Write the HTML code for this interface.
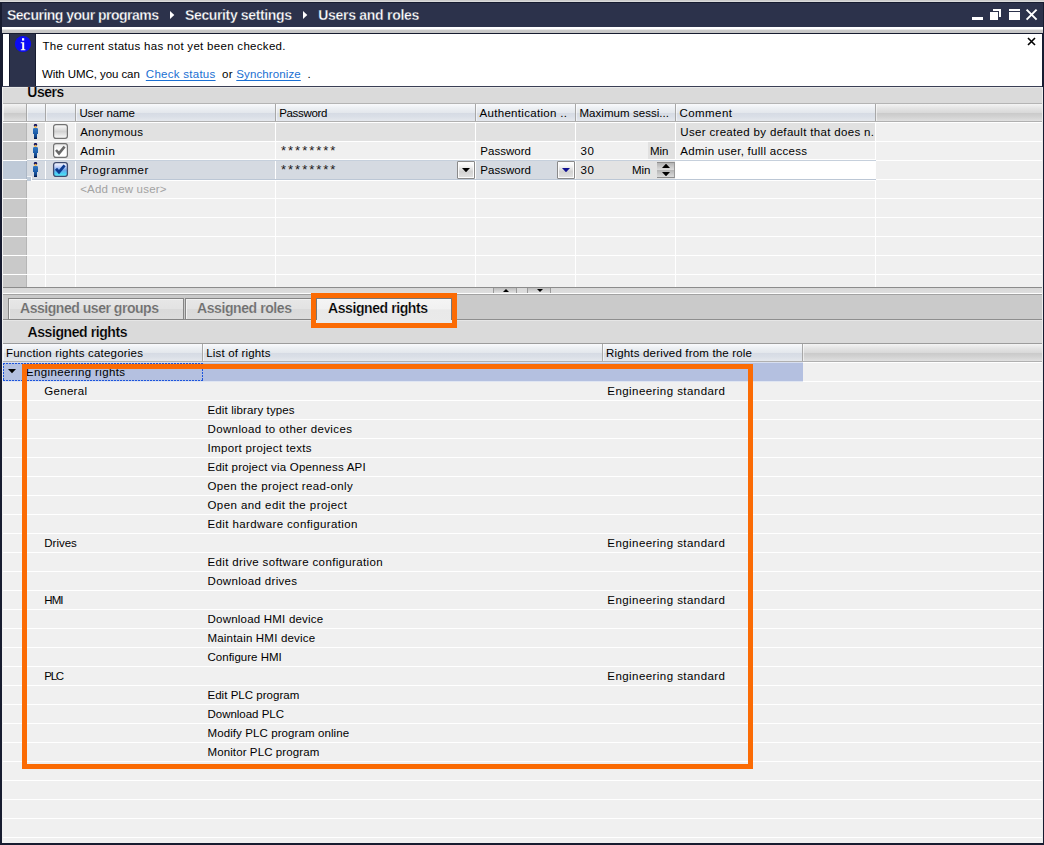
<!DOCTYPE html><html lang="en"><head><meta charset="utf-8"><title>Users and roles</title><style>
html,body{margin:0;padding:0}
body{width:1044px;height:845px;position:relative;overflow:hidden;background:#f0f0f0;font:12px "Liberation Sans", sans-serif;color:#000}
.a{position:absolute}
.t{position:absolute;white-space:pre;line-height:16px;height:16px;font-size:11.5px}
.ttl{font-weight:bold;font-size:14px;color:#fff;-webkit-text-stroke:0.3px #2c324b}
.hd{font-weight:bold;font-size:14px;-webkit-text-stroke:0.2px #dadada}
.tab{font-weight:bold;font-size:14px;color:#6e6e6e;-webkit-text-stroke:0.15px #e0e0e0}
.tab.act{color:#000;-webkit-text-stroke:0.2px #eeeeee}
.lnk{color:#1a6fd2;text-decoration:underline;text-underline-offset:2px;text-decoration-thickness:1px}
.gray{color:#a2a2a2}
.star{font-size:13px;color:#1a1a1a}
.hdr,.ehdr{box-shadow:inset 1px 0 0 rgba(255,255,255,.55)}
.hdr{background:linear-gradient(#f9fafc 0%,#eceff3 25%,#e3e7ec 52%,#d6dbe4 54%,#dadfe7 75%,#e5e8ed 100%)}
.ehdr{background:linear-gradient(#f4f4f4 0%,#e4e4e4 25%,#d9d9d9 52%,#cacaca 54%,#d2d2d2 75%,#e0e0e0 100%)}
</style></head><body>
<div class="a" style="left:0px;top:0px;width:1044px;height:1px;background:#cccccc;"></div>
<div class="a" style="left:0px;top:1px;width:1044px;height:1px;background:#dcdcdc;"></div>
<div class="a" style="left:0px;top:2px;width:1044px;height:843px;background:#171c30;"></div>
<div class="a" style="left:2px;top:3px;width:1041px;height:24px;background:#2c324b;"></div>
<div class="a" style="left:2px;top:27px;width:1041px;height:6px;background:linear-gradient(#ffffff 0%,#ffffff 30%,#e2e2e2 45%,#c8c8c8 58%,#c6c6c6 100%);"></div>
<div class="a" style="left:2px;top:33px;width:1040px;height:1px;background:#171c30;"></div>
<div class="a" style="left:3px;top:34px;width:1039px;height:52px;background:#ffffff;"></div>
<div class="a" style="left:9px;top:34px;width:26px;height:52px;background:#2c324b;"></div>
<div class="a" style="left:35px;top:34px;width:1px;height:52px;background:#171c30;"></div>
<div class="a" style="left:9px;top:34px;width:1px;height:52px;background:#171c30;"></div>
<div class="a" style="left:2px;top:86px;width:1040px;height:1px;background:#3a3f55;"></div>
<svg class="a" style="left:14px;top:35px" width="18" height="18" viewBox="0 0 18 18"><circle cx="9" cy="9" r="8.1" fill="#0c0cf6"/><rect x="8" y="3.2" width="2.2" height="2.4" fill="#fff"/><path d="M6.8 7.2h3.4v7h1.2v1H6.8v-1h1.4V8.3H6.8z" fill="#fffff0"/></svg>
<svg class="a" style="left:965px;top:3px" width="77" height="24" viewBox="965 3 77 24" shape-rendering="crispEdges"><g fill="#fff"><rect x="972" y="17" width="11" height="3"/><rect x="990" y="12" width="8" height="8"/><path d="M993 9H1001V17H999V11H993z"/><rect x="1009" y="9" width="11" height="2"/><rect x="1009" y="12" width="11" height="8"/></g><g stroke="#fff" stroke-width="2" shape-rendering="geometricPrecision"><path d="M1026.6 9.6l10 10M1036.6 9.6l-10 10"/></g></svg>
<svg class="a" style="left:1026px;top:36px" width="11" height="11" viewBox="0 0 11 11"><path d="M2 2l7 7M9 2l-7 7" stroke="#000" stroke-width="1.6"/></svg>
<svg class="a" style="left:170px;top:11px" width="6" height="9" viewBox="0 0 6 9"><path d="M0 0L4.3 4L0 8z" fill="#fff"/></svg>
<svg class="a" style="left:303.3px;top:11px" width="6" height="9" viewBox="0 0 6 9"><path d="M0 0L4.3 4L0 8z" fill="#fff"/></svg>
<div class="a" style="left:2px;top:87px;width:1040px;height:16px;background:#dadada;"></div>
<div class="a" style="left:2px;top:87px;width:1px;height:756px;background:#f0f0f0;"></div>
<div class="a" style="left:1042px;top:87px;width:1px;height:756px;background:#ececec;"></div>
<div class="a" style="left:3px;top:87px;width:1039px;height:1px;background:#e8e8e8;"></div>
<div class="a" style="left:3px;top:103px;width:1039px;height:1px;background:#b4b4b4;"></div>
<div class="a" style="left:3px;top:121px;width:1039px;height:1px;background:#b0b0b0;"></div>
<div class="a ehdr" style="left:3px;top:104px;width:23px;height:17px;"></div>
<div class="a hdr" style="left:27px;top:104px;width:18px;height:17px;"></div>
<div class="a" style="left:45px;top:104px;width:1px;height:17px;background:#a8a8a8;"></div>
<div class="a hdr" style="left:46px;top:104px;width:29px;height:17px;"></div>
<div class="a" style="left:75px;top:104px;width:1px;height:17px;background:#a8a8a8;"></div>
<div class="a hdr" style="left:76px;top:104px;width:199px;height:17px;"></div>
<div class="a" style="left:275px;top:104px;width:1px;height:17px;background:#a8a8a8;"></div>
<div class="a hdr" style="left:276px;top:104px;width:199px;height:17px;"></div>
<div class="a" style="left:475px;top:104px;width:1px;height:17px;background:#a8a8a8;"></div>
<div class="a hdr" style="left:476px;top:104px;width:99px;height:17px;"></div>
<div class="a" style="left:575px;top:104px;width:1px;height:17px;background:#a8a8a8;"></div>
<div class="a hdr" style="left:576px;top:104px;width:99px;height:17px;"></div>
<div class="a" style="left:675px;top:104px;width:1px;height:17px;background:#a8a8a8;"></div>
<div class="a hdr" style="left:676px;top:104px;width:199px;height:17px;"></div>
<div class="a" style="left:875px;top:104px;width:1px;height:17px;background:#a8a8a8;"></div>
<div class="a" style="left:26px;top:104px;width:1px;height:17px;background:#a8a8a8;"></div>
<div class="a ehdr" style="left:876px;top:104px;width:166px;height:17px;"></div>
<div class="a" style="left:3px;top:122px;width:1039px;height:165px;background:#f0f0f0;"></div>
<div class="a" style="left:3px;top:122px;width:23px;height:165px;background:#c9c9c9;"></div>
<div class="a" style="left:27px;top:123px;width:18px;height:18px;background:#e1e1e1;"></div>
<div class="a" style="left:76px;top:123px;width:799px;height:18px;background:#e1e1e1;"></div>
<div class="a" style="left:27px;top:142px;width:18px;height:18px;background:#e1e1e1;"></div>
<div class="a" style="left:46px;top:142px;width:29px;height:18px;background:#e1e1e1;"></div>
<div class="a" style="left:648px;top:142px;width:27px;height:18px;background:#e1e1e1;"></div>
<div class="a" style="left:3px;top:161px;width:23px;height:18px;background:#bfcad8;"></div>
<div class="a" style="left:27px;top:161px;width:848px;height:18px;background:#d5dae1;"></div>
<div class="a" style="left:576px;top:161px;width:99px;height:18px;background:#e3e3e3;"></div>
<div class="a" style="left:676px;top:161px;width:199px;height:18px;background:#ffffff;"></div>
<div class="a" style="left:26px;top:122px;width:1px;height:165px;background:#b6b6b6;"></div>
<div class="a" style="left:26px;top:161px;width:1px;height:18px;background:#acb7c5;"></div>
<div class="a" style="left:3px;top:122px;width:1039px;height:1px;background:#ffffff;"></div>
<div class="a" style="left:3px;top:141px;width:1039px;height:1px;background:#ffffff;"></div>
<div class="a" style="left:3px;top:160px;width:1039px;height:1px;background:#ffffff;"></div>
<div class="a" style="left:3px;top:179px;width:1039px;height:1px;background:#ffffff;"></div>
<div class="a" style="left:3px;top:198px;width:1039px;height:1px;background:#ffffff;"></div>
<div class="a" style="left:3px;top:217px;width:1039px;height:1px;background:#ffffff;"></div>
<div class="a" style="left:3px;top:236px;width:1039px;height:1px;background:#ffffff;"></div>
<div class="a" style="left:3px;top:255px;width:1039px;height:1px;background:#ffffff;"></div>
<div class="a" style="left:3px;top:274px;width:1039px;height:1px;background:#ffffff;"></div>
<div class="a" style="left:45px;top:122px;width:1px;height:165px;background:#ffffff;"></div>
<div class="a" style="left:75px;top:122px;width:1px;height:165px;background:#ffffff;"></div>
<div class="a" style="left:275px;top:122px;width:1px;height:165px;background:#ffffff;"></div>
<div class="a" style="left:475px;top:122px;width:1px;height:165px;background:#ffffff;"></div>
<div class="a" style="left:575px;top:122px;width:1px;height:165px;background:#ffffff;"></div>
<div class="a" style="left:675px;top:122px;width:1px;height:165px;background:#ffffff;"></div>
<div class="a" style="left:875px;top:122px;width:1px;height:165px;background:#ffffff;"></div>
<div class="a" style="left:27px;top:159px;width:848px;height:1px;background:#ffffff;"></div>
<div class="a" style="left:27px;top:160px;width:849px;height:1px;background:#c6d0dc;"></div>
<div class="a" style="left:31px;top:179px;width:845px;height:1px;background:#bcc7d5;"></div>
<div class="a" style="left:31px;top:180px;width:844px;height:1px;background:#ffffff;"></div>
<div class="a" style="left:27px;top:177px;width:4px;height:4px;background:#c0ccda;"></div>
<div class="a" style="left:31px;top:176px;width:1px;height:5px;background:#fff;"></div>
<div class="a" style="left:27px;top:176px;width:5px;height:1px;background:#eef1f5;"></div>
<svg class="a" style="left:32px;top:124px" width="8" height="16" viewBox="0 0 8 16"><defs><linearGradient id="pg0" x1="0" y1="0" x2="0" y2="1"><stop offset="0" stop-color="#3478c0"/><stop offset=".5" stop-color="#1c5ca8"/><stop offset="1" stop-color="#083474"/></linearGradient></defs><ellipse cx="3.5" cy="1.5" rx="1.7" ry="1.6" fill="#12125c"/><ellipse cx="3.5" cy="2.9" rx="1.15" ry="1.25" fill="#f6b84c"/><path d="M1 5.3Q1 4 2.3 4H4.7Q6 4 6 5.3V10H5V15H2V10H1z" fill="url(#pg0)"/><rect x="2" y="13.7" width="3" height="1.3" fill="#061c50"/></svg>
<svg class="a" style="left:32px;top:143px" width="8" height="16" viewBox="0 0 8 16"><defs><linearGradient id="pg1" x1="0" y1="0" x2="0" y2="1"><stop offset="0" stop-color="#3478c0"/><stop offset=".5" stop-color="#1c5ca8"/><stop offset="1" stop-color="#083474"/></linearGradient></defs><ellipse cx="3.5" cy="1.5" rx="1.7" ry="1.6" fill="#12125c"/><ellipse cx="3.5" cy="2.9" rx="1.15" ry="1.25" fill="#f6b84c"/><path d="M1 5.3Q1 4 2.3 4H4.7Q6 4 6 5.3V10H5V15H2V10H1z" fill="url(#pg1)"/><rect x="2" y="13.7" width="3" height="1.3" fill="#061c50"/></svg>
<svg class="a" style="left:32px;top:162px" width="8" height="16" viewBox="0 0 8 16"><defs><linearGradient id="pg2" x1="0" y1="0" x2="0" y2="1"><stop offset="0" stop-color="#3478c0"/><stop offset=".5" stop-color="#1c5ca8"/><stop offset="1" stop-color="#083474"/></linearGradient></defs><ellipse cx="3.5" cy="1.5" rx="1.7" ry="1.6" fill="#12125c"/><ellipse cx="3.5" cy="2.9" rx="1.15" ry="1.25" fill="#f6b84c"/><path d="M1 5.3Q1 4 2.3 4H4.7Q6 4 6 5.3V10H5V15H2V10H1z" fill="url(#pg2)"/><rect x="2" y="13.7" width="3" height="1.3" fill="#061c50"/></svg>
<svg class="a" style="left:52px;top:123px" width="17" height="17" viewBox="0 0 17 17"><defs><linearGradient id="c0" x1="0" y1="0" x2="0" y2="1"><stop offset="0" stop-color="#fff"/><stop offset=".5" stop-color="#d2d2d2"/><stop offset="1" stop-color="#fbfbfb"/></linearGradient></defs><rect x="1.6" y="1.6" width="13.8" height="13.8" rx="2.3" fill="url(#c0)" stroke="#727272" stroke-width="1.2"/></svg>
<svg class="a" style="left:52px;top:142px" width="17" height="17" viewBox="0 0 17 17"><defs><linearGradient id="c1" x1="0" y1="0" x2="0" y2="1"><stop offset="0" stop-color="#e6e6e6"/><stop offset=".4" stop-color="#fdfdfd"/><stop offset="1" stop-color="#fff"/></linearGradient></defs><rect x="1.6" y="1.6" width="13.8" height="13.8" rx="2.3" fill="url(#c1)" stroke="#727272" stroke-width="1.2"/><path d="M4 8L7 11.4L12.6 4.6" fill="none" stroke="#686868" stroke-width="2.6"/></svg>
<svg class="a" style="left:52px;top:161px" width="17" height="17" viewBox="0 0 17 17"><defs><linearGradient id="c2" x1="0" y1="0" x2="0" y2="1"><stop offset="0" stop-color="#ffffff"/><stop offset=".3" stop-color="#c4d2fa"/><stop offset=".55" stop-color="#6ca6ea"/><stop offset=".8" stop-color="#48d0f4"/><stop offset="1" stop-color="#64f0fc"/></linearGradient></defs><rect x="1.6" y="1.6" width="13.8" height="13.8" rx="2.3" fill="url(#c2)" stroke="#3e4c70" stroke-width="1.3"/><path d="M4 7.8L7 11.2L12.6 4.4" fill="none" stroke="#0a3a90" stroke-width="2.8"/></svg>
<div class="a" style="left:457px;top:161px;width:18px;height:18px;border:1px solid #8a8a8a;border-radius:1px;box-sizing:border-box;background:linear-gradient(#ffffff 0%,#f4f4f4 25%,#d2d2d2 60%,#e2e2e2 100%);box-shadow:inset 0 0 0 1px #fafafa"></div><svg class="a" style="left:462px;top:168px" width="8" height="4" viewBox="0 0 8 4"><path d="M0 0H8L4 4.3z" fill="#000"/></svg>
<div class="a" style="left:557px;top:161px;width:18px;height:18px;border:1px solid #8a8a8a;border-radius:1px;box-sizing:border-box;background:linear-gradient(#ffffff 0%,#f4f4f4 25%,#d2d2d2 60%,#e2e2e2 100%);box-shadow:inset 0 0 0 1px #fafafa"></div><svg class="a" style="left:562px;top:168px" width="8" height="4" viewBox="0 0 8 4"><path d="M0 0H8L4 4.3z" fill="#101090"/></svg>
<div class="a" style="left:657px;top:162px;width:18px;height:8px;background:linear-gradient(#b4b4b4,#dcdcdc);border-top:1px solid #8e8e8e;border-right:1px solid #9a9a9a;box-sizing:border-box"></div>
<div class="a" style="left:657px;top:170px;width:18px;height:8px;background:linear-gradient(#b4b4b4,#dadada);border-bottom:1px solid #8e8e8e;border-right:1px solid #9a9a9a;box-sizing:border-box"></div>
<svg class="a" style="left:662px;top:164px" width="8" height="12" viewBox="0 0 8 12"><path d="M0 4L4 -0.3L8 4zM0 8L4 12.3L8 8z" fill="#000"/></svg>
<div class="a" style="left:3px;top:287px;width:1039px;height:1px;background:#8c8c8c;"></div>
<div class="a" style="left:3px;top:288px;width:1039px;height:5px;background:linear-gradient(#d8d8d8,#dedede);"></div>
<div class="a" style="left:3px;top:293px;width:1039px;height:1px;background:#fdfdfd;"></div>
<div class="a" style="left:3px;top:294px;width:1039px;height:1px;background:#a2a2a2;"></div>
<div class="a" style="left:493px;top:288px;width:24px;height:5px;background:linear-gradient(#bdbdbd,#e2e2e2);border-left:1px solid #9a9a9a;border-right:1px solid #9a9a9a;box-sizing:border-box"></div>
<svg class="a" style="left:502.5px;top:289px" width="6" height="3" viewBox="0 0 6 3"><path d="M0 3L3 0L6 3z" fill="#000"/></svg>
<div class="a" style="left:527px;top:288px;width:24px;height:5px;background:linear-gradient(#bdbdbd,#e2e2e2);border-left:1px solid #9a9a9a;border-right:1px solid #9a9a9a;box-sizing:border-box"></div>
<svg class="a" style="left:536.5px;top:289px" width="6" height="3" viewBox="0 0 6 3"><path d="M0 0L3 3L6 0z" fill="#000"/></svg>
<div class="a" style="left:3px;top:295px;width:1039px;height:24px;background:#cacaca;"></div>
<div class="a" style="left:3px;top:319px;width:1039px;height:1px;background:#8e8e8e;"></div>
<div class="a" style="left:3px;top:320px;width:1039px;height:23px;background:#dadada;"></div>
<div class="a" style="left:3px;top:320px;width:1039px;height:1px;background:#e6e6e6;"></div>
<div class="a" style="left:8px;top:298px;width:176px;height:22px;box-sizing:border-box;border:1px solid #858585;background:linear-gradient(#e7e7e7 0%,#e3e3e3 48%,#dadada 52%,#dcdcdc 100%);box-shadow:inset 1px 1px 0 #f2f2f2"></div>
<div class="a" style="left:185px;top:298px;width:127px;height:22px;box-sizing:border-box;border:1px solid #858585;background:linear-gradient(#e7e7e7 0%,#e3e3e3 48%,#dadada 52%,#dcdcdc 100%);box-shadow:inset 1px 1px 0 #f2f2f2"></div>
<div class="a" style="left:316px;top:298px;width:136px;height:25px;box-sizing:border-box;border:1px solid #777;border-bottom:none;background:linear-gradient(#fdfdfd 0,#f4f4f4 5%,#f1f1f1 42%,#e9e9e9 45%,#eaeaea 100%)"></div><div class="a" style="left:316px;top:320px;width:136px;height:3px;background:#eaeaea;"></div>
<div class="a" style="left:311px;top:293px;width:146px;height:35px;box-sizing:border-box;border:5px solid #fb6b04"></div>
<div class="a" style="left:3px;top:343px;width:1039px;height:1px;background:#9c9c9c;"></div>
<div class="a" style="left:3px;top:361px;width:1039px;height:1px;background:#b0b0b0;"></div>
<div class="a hdr" style="left:3px;top:344px;width:199px;height:17px;"></div>
<div class="a" style="left:202px;top:344px;width:1px;height:17px;background:#a8a8a8;"></div>
<div class="a hdr" style="left:203px;top:344px;width:399px;height:17px;"></div>
<div class="a" style="left:602px;top:344px;width:1px;height:17px;background:#a8a8a8;"></div>
<div class="a hdr" style="left:603px;top:344px;width:199px;height:17px;"></div>
<div class="a" style="left:802px;top:344px;width:1px;height:17px;background:#a8a8a8;"></div>
<div class="a ehdr" style="left:803px;top:344px;width:239px;height:17px;"></div>
<div class="a" style="left:3px;top:362px;width:1039px;height:481px;background:#f0f0f0;"></div>
<div class="a" style="left:3px;top:363px;width:800px;height:18px;background:#b4c0e0;"></div>
<div class="a" style="left:3px;top:362px;width:1039px;height:1px;background:#ffffff;"></div>
<div class="a" style="left:3px;top:381px;width:1039px;height:1px;background:#ffffff;"></div>
<div class="a" style="left:3px;top:400px;width:1039px;height:1px;background:#ffffff;"></div>
<div class="a" style="left:3px;top:419px;width:1039px;height:1px;background:#ffffff;"></div>
<div class="a" style="left:3px;top:438px;width:1039px;height:1px;background:#ffffff;"></div>
<div class="a" style="left:3px;top:457px;width:1039px;height:1px;background:#ffffff;"></div>
<div class="a" style="left:3px;top:476px;width:1039px;height:1px;background:#ffffff;"></div>
<div class="a" style="left:3px;top:495px;width:1039px;height:1px;background:#ffffff;"></div>
<div class="a" style="left:3px;top:514px;width:1039px;height:1px;background:#ffffff;"></div>
<div class="a" style="left:3px;top:533px;width:1039px;height:1px;background:#ffffff;"></div>
<div class="a" style="left:3px;top:552px;width:1039px;height:1px;background:#ffffff;"></div>
<div class="a" style="left:3px;top:571px;width:1039px;height:1px;background:#ffffff;"></div>
<div class="a" style="left:3px;top:590px;width:1039px;height:1px;background:#ffffff;"></div>
<div class="a" style="left:3px;top:609px;width:1039px;height:1px;background:#ffffff;"></div>
<div class="a" style="left:3px;top:628px;width:1039px;height:1px;background:#ffffff;"></div>
<div class="a" style="left:3px;top:647px;width:1039px;height:1px;background:#ffffff;"></div>
<div class="a" style="left:3px;top:666px;width:1039px;height:1px;background:#ffffff;"></div>
<div class="a" style="left:3px;top:685px;width:1039px;height:1px;background:#ffffff;"></div>
<div class="a" style="left:3px;top:704px;width:1039px;height:1px;background:#ffffff;"></div>
<div class="a" style="left:3px;top:723px;width:1039px;height:1px;background:#ffffff;"></div>
<div class="a" style="left:3px;top:742px;width:1039px;height:1px;background:#ffffff;"></div>
<div class="a" style="left:3px;top:761px;width:1039px;height:1px;background:#ffffff;"></div>
<div class="a" style="left:3px;top:780px;width:1039px;height:1px;background:#ffffff;"></div>
<div class="a" style="left:3px;top:799px;width:1039px;height:1px;background:#ffffff;"></div>
<div class="a" style="left:3px;top:818px;width:1039px;height:1px;background:#ffffff;"></div>
<div class="a" style="left:3px;top:837px;width:1039px;height:1px;background:#ffffff;"></div>
<div class="a" style="left:3px;top:362px;width:800px;height:1px;background:#d8dff0;"></div>
<div class="a" style="left:3px;top:381px;width:800px;height:1px;background:#dfe5f2;"></div>
<div class="a" style="left:3px;top:363px;width:200px;height:1px;background:repeating-linear-gradient(90deg,#1d55dc 0,#1d55dc 2px,transparent 2px,transparent 3px);"></div>
<div class="a" style="left:3px;top:380px;width:200px;height:1px;background:repeating-linear-gradient(90deg,#1d55dc 0,#1d55dc 2px,transparent 2px,transparent 3px);"></div>
<div class="a" style="left:3px;top:363px;width:1px;height:18px;background:repeating-linear-gradient(180deg,#1d55dc 0,#1d55dc 2px,transparent 2px,transparent 3px);"></div>
<div class="a" style="left:202px;top:363px;width:1px;height:18px;background:repeating-linear-gradient(180deg,#1d55dc 0,#1d55dc 2px,transparent 2px,transparent 3px);"></div>
<svg class="a" style="left:8px;top:369px" width="8" height="5" viewBox="0 0 8 5"><path d="M0 0H8L4 4.3z" fill="#000"/></svg>
<span class="t ttl" id="t0" style="left:7px;top:7px;letter-spacing:-0.504px;">Securing your programs</span>
<span class="t ttl" id="t1" style="left:185px;top:7px;letter-spacing:-0.364px;">Security settings</span>
<span class="t ttl" id="t2" style="left:318.3px;top:7px;letter-spacing:-0.290px;">Users and roles</span>
<span class="t " id="t3" style="left:42.5px;top:38px;letter-spacing:0.299px;">The current status has not yet been checked.</span>
<span class="t " id="t4" style="left:42px;top:66px;letter-spacing:-0.079px;">With UMC, you can</span>
<span class="t lnk" id="t5" style="left:145.8px;top:66px;letter-spacing:0.274px;">Check status</span>
<span class="t " id="t6" style="left:222px;top:66px;letter-spacing:0.366px;">or</span>
<span class="t lnk" id="t7" style="left:236.3px;top:66px;letter-spacing:0.110px;">Synchronize</span>
<span class="t " id="t8" style="left:307.5px;top:66px;">.</span>
<span class="t hd" id="t9" style="left:27.3px;top:84px;letter-spacing:-0.505px;clip-path:inset(3px 0 0 0);">Users</span>
<span class="t " id="t10" style="left:79.4px;top:104.5px;letter-spacing:-0.094px;">User name</span>
<span class="t " id="t11" style="left:279.2px;top:104.5px;letter-spacing:-0.329px;">Password</span>
<span class="t " id="t12" style="left:479.5px;top:104.5px;letter-spacing:0.313px;">Authentication ..</span>
<span class="t " id="t13" style="left:579.5px;top:104.5px;letter-spacing:0.045px;">Maximum sessi...</span>
<span class="t " id="t14" style="left:679.5px;top:104.5px;letter-spacing:0.440px;">Comment</span>
<span class="t " id="t15" style="left:80.2px;top:123.69999999999999px;letter-spacing:0.258px;">Anonymous</span>
<span class="t " id="t16" style="left:680.3px;top:123.69999999999999px;letter-spacing:0.328px;">User created by default that does n.</span>
<span class="t " id="t17" style="left:80.2px;top:142.7px;letter-spacing:0.498px;">Admin</span>
<span class="t star" id="t18" style="left:281px;top:143.2px;letter-spacing:1.988px;">********</span>
<span class="t " id="t19" style="left:480.3px;top:142.7px;letter-spacing:0.029px;">Password</span>
<span class="t " id="t20" style="left:580.5px;top:142.7px;letter-spacing:0.703px;">30</span>
<span class="t " id="t21" style="left:650px;top:142.7px;letter-spacing:-0.016px;">Min</span>
<span class="t " id="t22" style="left:680.3px;top:142.7px;letter-spacing:0.284px;">Admin user, fulll access</span>
<span class="t " id="t23" style="left:80.2px;top:161.7px;letter-spacing:0.466px;">Programmer</span>
<span class="t star" id="t24" style="left:281px;top:162.2px;letter-spacing:1.988px;">********</span>
<span class="t " id="t25" style="left:480.3px;top:161.7px;letter-spacing:0.029px;">Password</span>
<span class="t " id="t26" style="left:580.5px;top:161.7px;letter-spacing:0.703px;">30</span>
<span class="t " id="t27" style="left:632px;top:161.7px;letter-spacing:-0.016px;">Min</span>
<span class="t gray" id="t28" style="left:80.2px;top:180.7px;letter-spacing:0.195px;">&lt;Add new user&gt;</span>
<span class="t tab" id="t29" style="left:20px;top:299.5px;letter-spacing:-0.464px;">Assigned user groups</span>
<span class="t tab" id="t30" style="left:197px;top:299.5px;letter-spacing:-0.413px;">Assigned roles</span>
<span class="t tab act" id="t31" style="left:328px;top:299.5px;letter-spacing:-0.414px;">Assigned rights</span>
<span class="t hd" id="t32" style="left:27.5px;top:323.5px;letter-spacing:-0.414px;">Assigned rights</span>
<span class="t " id="t33" style="left:6px;top:345px;letter-spacing:0.212px;">Function rights categories</span>
<span class="t " id="t34" style="left:206.2px;top:345px;letter-spacing:0.177px;">List of rights</span>
<span class="t " id="t35" style="left:606px;top:345px;letter-spacing:0.175px;">Rights derived from the role</span>
<span class="t " id="t36" style="left:26px;top:363.7px;letter-spacing:0.370px;">Engineering rights</span>
<span class="t " id="t37" style="left:44.3px;top:382.7px;letter-spacing:0.296px;">General</span>
<span class="t " id="t38" style="left:607.3px;top:382.7px;letter-spacing:0.440px;">Engineering standard</span>
<span class="t " id="t39" style="left:207.5px;top:401.7px;letter-spacing:0.123px;">Edit library types</span>
<span class="t " id="t40" style="left:207.5px;top:420.7px;letter-spacing:0.370px;">Download to other devices</span>
<span class="t " id="t41" style="left:207.5px;top:439.7px;letter-spacing:0.332px;">Import project texts</span>
<span class="t " id="t42" style="left:207.5px;top:458.7px;letter-spacing:0.213px;">Edit project via Openness API</span>
<span class="t " id="t43" style="left:207.5px;top:477.7px;letter-spacing:0.361px;">Open the project read-only</span>
<span class="t " id="t44" style="left:207.5px;top:496.7px;letter-spacing:0.427px;">Open and edit the project</span>
<span class="t " id="t45" style="left:207.5px;top:515.7px;letter-spacing:0.381px;">Edit hardware configuration</span>
<span class="t " id="t46" style="left:44.3px;top:534.7px;letter-spacing:-0.019px;">Drives</span>
<span class="t " id="t47" style="left:607.3px;top:534.7px;letter-spacing:0.440px;">Engineering standard</span>
<span class="t " id="t48" style="left:207.5px;top:553.7px;letter-spacing:0.361px;">Edit drive software configuration</span>
<span class="t " id="t49" style="left:207.5px;top:572.7px;letter-spacing:0.327px;">Download drives</span>
<span class="t " id="t50" style="left:44.3px;top:591.7px;letter-spacing:-0.947px;">HMI</span>
<span class="t " id="t51" style="left:607.3px;top:591.7px;letter-spacing:0.440px;">Engineering standard</span>
<span class="t " id="t52" style="left:207.5px;top:610.7px;letter-spacing:0.213px;">Download HMI device</span>
<span class="t " id="t53" style="left:207.5px;top:629.7px;letter-spacing:0.190px;">Maintain HMI device</span>
<span class="t " id="t54" style="left:207.5px;top:648.7px;letter-spacing:0.013px;">Configure HMI</span>
<span class="t " id="t55" style="left:44.3px;top:667.7px;letter-spacing:-1.300px;">PLC</span>
<span class="t " id="t56" style="left:607.3px;top:667.7px;letter-spacing:0.440px;">Engineering standard</span>
<span class="t " id="t57" style="left:207.5px;top:686.7px;letter-spacing:0.026px;">Edit PLC program</span>
<span class="t " id="t58" style="left:207.5px;top:705.7px;letter-spacing:-0.020px;">Download PLC</span>
<span class="t " id="t59" style="left:207.5px;top:724.7px;letter-spacing:0.094px;">Modify PLC program online</span>
<span class="t " id="t60" style="left:207.5px;top:743.7px;letter-spacing:0.103px;">Monitor PLC program</span>
<div class="a" style="left:22px;top:364px;width:731px;height:405px;box-sizing:border-box;border:5px solid #fb6b04"></div>
</body></html>
